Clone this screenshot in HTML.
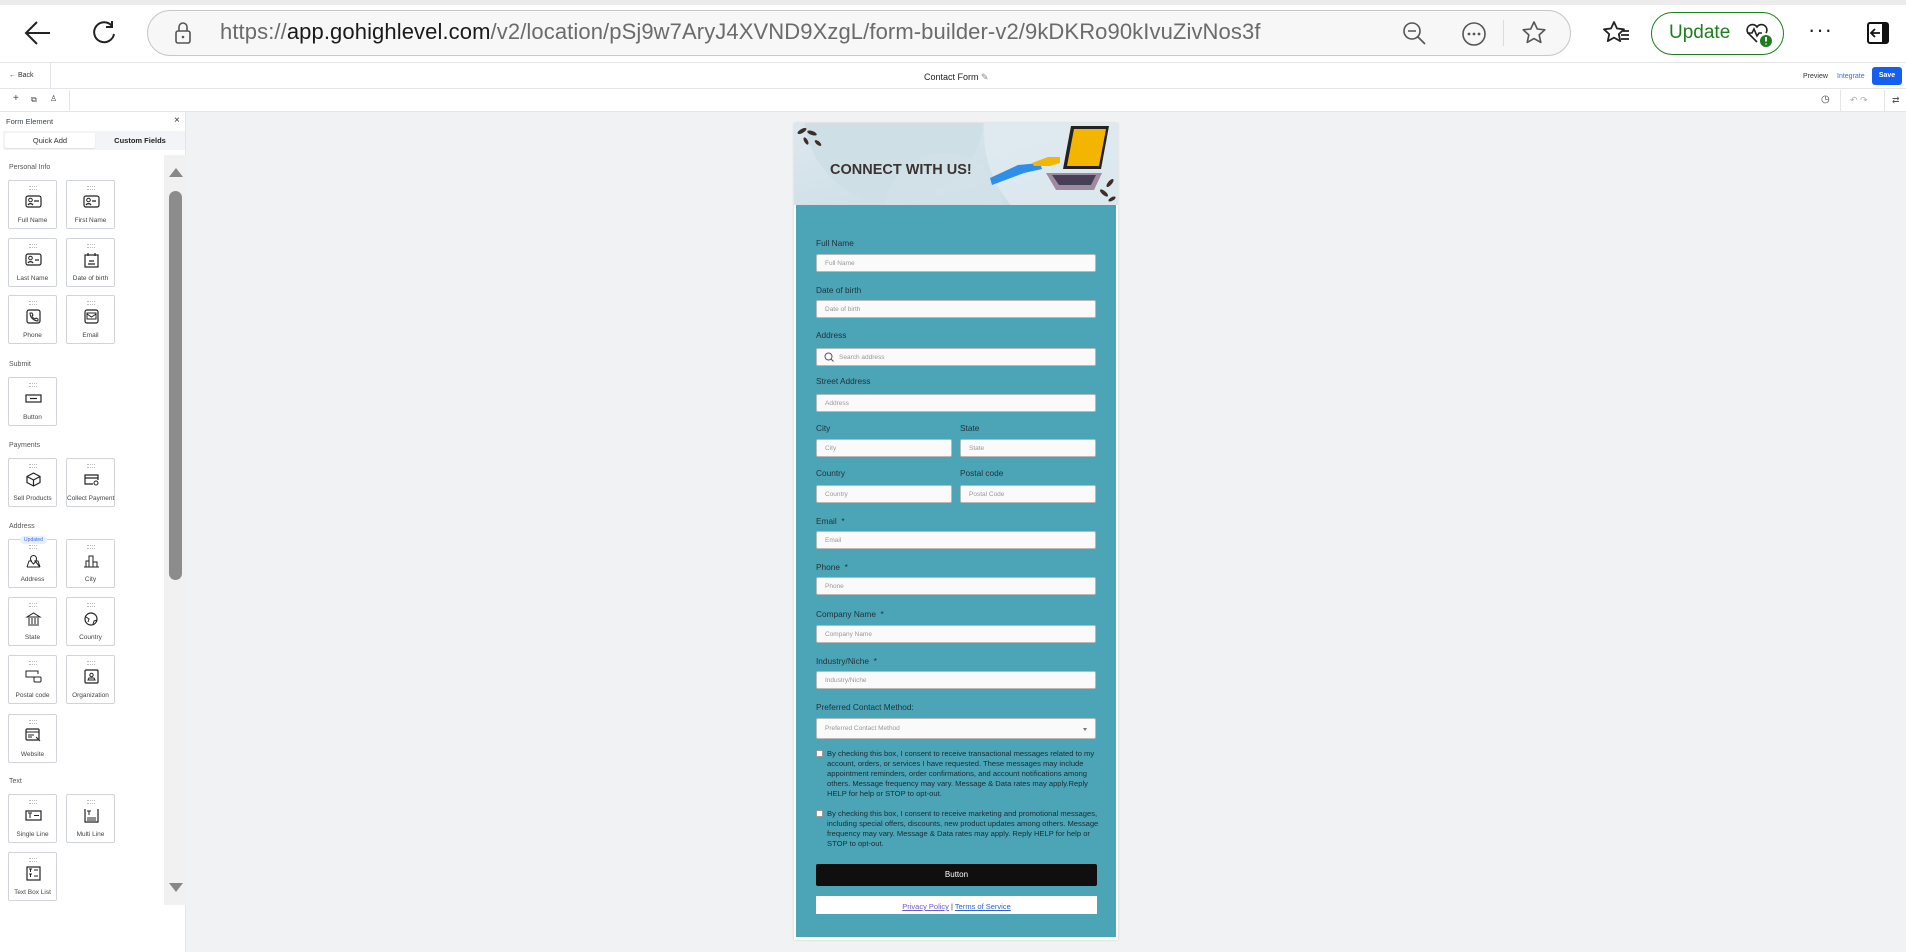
<!DOCTYPE html>
<html><head><meta charset="utf-8">
<style>
*{box-sizing:border-box;margin:0;padding:0}
body{width:1906px;height:952px;overflow:hidden;background:#f1f2f4;font-family:"Liberation Sans",sans-serif;position:relative}
.a{position:absolute}
.chrome{left:0;top:0;width:1906px;height:62px;background:#fff}
.url{left:147px;top:10px;width:1424px;height:46px;border:1px solid #c8c8c8;border-radius:23px;background:#f7f7f7}
.urlt{left:220px;top:19px;font-size:22px;color:#6b6b6b;white-space:nowrap;letter-spacing:.1px}
.urlt b{font-weight:normal;color:#1a1a1a}
.hdr{left:0;top:62px;width:1906px;height:27px;background:#fff;border-bottom:1px solid #e4e5e8;border-top:1px solid #e4e5e8}
.tb{left:0;top:89px;width:1906px;height:23px;background:#fff;border-bottom:1px solid #e4e5e8}
.panel{left:0;top:112px;width:186px;height:840px;background:#fff;border-right:1px solid #e4e5e8}
.sec{font-size:7px;color:#555;left:9px}
.tile{width:49px;height:49px;border:1px solid #d0d4da;border-radius:2px;background:#fff}
.tile .dots{position:absolute;left:20px;top:5px;width:8px;height:4px;border-top:1px dotted #bbb;border-bottom:1px dotted #bbb}
.tile svg{position:absolute;left:16px;top:13px}
.tile span{position:absolute;left:0;right:0;top:36px;text-align:center;font-size:6.5px;color:#444;white-space:nowrap}
.form{left:794px;top:123px;width:324px;height:817px;background:#fff;box-shadow:0 0 2px #ccc}
.teal{left:796px;top:205px;width:320px;height:732px;background:#4ba5b7}
.lbl{font-size:8.3px;color:#23323a;left:816px}
.inp{left:816px;width:280px;height:18px;background:#fafafa;border:1px solid #b9b9b9;border-radius:2px;font-size:6.5px;color:#999;padding:5px 0 0 8px;white-space:nowrap}
.cb{left:816px;width:7px;height:7px;background:#fff;border:1px solid #999;border-radius:1px}
.cbt{left:827px;width:275px;font-size:7.6px;line-height:10px;color:#1c2b33}
</style></head><body>
<div class="a chrome"></div>
<div class="a" style="left:0;top:0;width:1906px;height:5px;background:#ececec"></div>
<svg class="a" style="left:24px;top:20px" width="28" height="26" viewBox="0 0 28 26"><path d="M26 13H3M13 2L2 13l11 11" fill="none" stroke="#222" stroke-width="2"/></svg>
<svg class="a" style="left:91px;top:20px" width="26" height="26" viewBox="0 0 26 26"><path d="M21 6A10 10 0 1 0 23 14M21 1v6h-6" fill="none" stroke="#222" stroke-width="2"/></svg>
<div class="a url"></div>
<svg class="a" style="left:174px;top:21px" width="18" height="24" viewBox="0 0 18 24"><rect x="2" y="10" width="14" height="12" rx="2" fill="none" stroke="#555" stroke-width="1.6"/><path d="M5 10V6a4 4 0 0 1 8 0v4" fill="none" stroke="#555" stroke-width="1.6"/><circle cx="9" cy="16" r="1.3" fill="#555"/></svg>
<div class="a urlt">https://<b>app.gohighlevel.com</b>/v2/location/pSj9w7AryJ4XVND9XzgL/form-builder-v2/9kDKRo90kIvuZivNos3f</div>
<svg class="a" style="left:1402px;top:21px" width="26" height="26" viewBox="0 0 26 26"><circle cx="10" cy="10" r="8" fill="none" stroke="#555" stroke-width="1.6"/><path d="M6 10h8M16 16l7 7" stroke="#555" stroke-width="1.6"/></svg>
<svg class="a" style="left:1461px;top:21px" width="26" height="26" viewBox="0 0 26 26"><circle cx="13" cy="13" r="11" fill="none" stroke="#555" stroke-width="1.6"/><circle cx="8" cy="13" r="1.4" fill="#555"/><circle cx="13" cy="13" r="1.4" fill="#555"/><circle cx="18" cy="13" r="1.4" fill="#555"/></svg>
<div class="a" style="left:1503px;top:20px;width:1px;height:26px;background:#ddd"></div>
<svg class="a" style="left:1521px;top:20px" width="26" height="26" viewBox="0 0 26 26"><path d="M13 2l3.3 7 7.5.8-5.6 5.1 1.6 7.5L13 18.6 6.2 22.4l1.6-7.5L2.2 9.8 9.7 9z" fill="none" stroke="#555" stroke-width="1.6" stroke-linejoin="round"/></svg>
<svg class="a" style="left:1603px;top:20px" width="28" height="26" viewBox="0 0 28 26"><path d="M11 2l3 6.5 7 .8-5.2 4.8 1.4 7L11 17.6 4.8 21.1l1.4-7L1 9.3l7-.8z" fill="none" stroke="#222" stroke-width="1.8" stroke-linejoin="round"/><path d="M18 15h8M18 19h8M20 11h6" stroke="#222" stroke-width="1.8"/></svg>
<div class="a" style="left:1651px;top:12px;width:133px;height:43px;border:1.5px solid #1e7d1e;border-radius:22px"></div>
<div class="a" style="left:1669px;top:22px;font-size:19px;color:#1e7d1e">Update</div>
<svg class="a" style="left:1744px;top:20px" width="32" height="30" viewBox="0 0 32 30"><path d="M13 22L4 13a5 5 0 0 1 9-6 5 5 0 0 1 9 6M3 13h5l2-4 3 7 2-3h3" fill="none" stroke="#222" stroke-width="1.6"/><circle cx="22" cy="21" r="6" fill="#1e7d1e"/><path d="M22 17v4.5M22 23.5v1" stroke="#fff" stroke-width="1.8"/></svg>
<div class="a" style="left:1808px;top:17px;font-size:22px;color:#222;letter-spacing:1px">···</div>
<svg class="a" style="left:1866px;top:21px" width="24" height="24" viewBox="0 0 24 24"><rect x="2" y="2" width="20" height="20" rx="2" fill="none" stroke="#111" stroke-width="2"/><rect x="16" y="2" width="6" height="20" fill="#111"/><path d="M14 12H6M9 8l-4 4 4 4" fill="none" stroke="#111" stroke-width="1.8"/></svg>

<div class="a hdr"></div>
<div class="a" style="left:9px;top:72px;font-size:7px;color:#333">← Back</div>
<div class="a" style="left:50px;top:63px;width:1px;height:26px;background:#e4e5e8"></div>
<div class="a" style="left:924px;top:72px;font-size:9px;color:#222">Contact Form <span style="color:#888">✎</span></div>
<div class="a" style="left:1803px;top:73px;font-size:7px;color:#333">Preview</div>
<div class="a" style="left:1837px;top:73px;font-size:7px;color:#3b6de0">Integrate</div>
<div class="a" style="left:1872px;top:67px;width:30px;height:18px;background:#155eef;border-radius:3px;color:#fff;font-size:7px;font-weight:bold;text-align:center;line-height:18px">Save</div>
<div class="a tb"></div>
<div class="a" style="left:13px;top:93px;font-size:10px;color:#444">+</div>
<div class="a" style="left:31px;top:95px;font-size:8px;color:#444">⧉</div>
<div class="a" style="left:50px;top:94px;font-size:8px;color:#444">♙</div>
<div class="a" style="left:69px;top:90px;width:1px;height:22px;background:#e4e5e8"></div>
<div class="a" style="left:1821px;top:94px;font-size:10px;color:#444">◷</div>
<div class="a" style="left:1840px;top:90px;width:1px;height:22px;background:#e4e5e8"></div>
<div class="a" style="left:1850px;top:95px;font-size:9px;color:#aaa">↶ ↷</div>
<div class="a" style="left:1884px;top:90px;width:1px;height:22px;background:#e4e5e8"></div>
<div class="a" style="left:1892px;top:95px;font-size:9px;color:#555">⇄</div>

<div class="a panel"></div>
<div class="a" style="left:6px;top:117px;font-size:7.5px;color:#3a4654">Form Element</div>
<div class="a" style="left:174px;top:115px;font-size:10px;color:#333">×</div>
<div class="a" style="left:3px;top:131px;width:182px;height:19px;background:#f2f4f7"></div>
<div class="a" style="left:5px;top:133px;width:90px;height:15px;background:#fff;border-radius:2px;box-shadow:0 1px 1px #e0e0e0;font-size:7.5px;color:#333;text-align:center;line-height:15px">Quick Add</div>
<div class="a" style="left:96px;top:133px;width:88px;height:15px;font-size:7.5px;color:#222;font-weight:bold;text-align:center;line-height:15px">Custom Fields</div>
<div class="a" style="left:164px;top:155px;width:22px;height:750px;background:#f1f1f1"></div>
<div class="a" style="left:169px;top:168px;width:0;height:0;border-left:7px solid transparent;border-right:7px solid transparent;border-bottom:9px solid #888"></div>
<div class="a" style="left:169px;top:191px;width:13px;height:389px;background:#8c8c8c;border-radius:7px"></div>
<div class="a" style="left:169px;top:883px;width:0;height:0;border-left:7px solid transparent;border-right:7px solid transparent;border-top:9px solid #888"></div>

<div class="a sec" style="top:164px">Personal Info</div>
<div class="a sec" style="top:361px">Submit</div>
<div class="a sec" style="top:442px">Payments</div>
<div class="a sec" style="top:523px">Address</div>
<div class="a sec" style="top:778px">Text</div>

<div class="a tile" style="left:8px;top:180px"><div class="dots"></div><svg width="17" height="15" viewBox="0 0 17 15"><rect x="1" y="2" width="15" height="11" rx="2" fill="none" stroke="#222" stroke-width="1.2"/><circle cx="5.5" cy="6" r="1.8" fill="none" stroke="#222"/><path d="M3 11a3 3 0 0 1 5 0M9 7h5" stroke="#222" fill="none" stroke-width="1.2"/></svg><span>Full Name</span></div>
<div class="a tile" style="left:66px;top:180px"><div class="dots"></div><svg width="17" height="15" viewBox="0 0 17 15"><rect x="1" y="2" width="15" height="11" rx="2" fill="none" stroke="#222" stroke-width="1.2"/><circle cx="5.5" cy="6" r="1.8" fill="none" stroke="#222"/><path d="M3 11a3 3 0 0 1 5 0M9 7h4" stroke="#222" fill="none" stroke-width="1.2"/></svg><span>First Name</span></div>
<div class="a tile" style="left:8px;top:238px"><div class="dots"></div><svg width="17" height="15" viewBox="0 0 17 15"><rect x="1" y="2" width="15" height="11" rx="2" fill="none" stroke="#222" stroke-width="1.2"/><circle cx="5.5" cy="6" r="1.8" fill="none" stroke="#222"/><path d="M3 11a3 3 0 0 1 5 0M10 8h4" stroke="#222" fill="none" stroke-width="1.2"/></svg><span>Last Name</span></div>
<div class="a tile" style="left:66px;top:238px"><div class="dots"></div><svg width="17" height="16" viewBox="0 0 17 16"><rect x="2" y="3" width="13" height="12" fill="none" stroke="#222" stroke-width="1.2"/><path d="M5 1v3M12 1v3M5 12h7M6 9h5" stroke="#222" stroke-width="1.2"/></svg><span>Date of birth</span></div>
<div class="a tile" style="left:8px;top:295px"><div class="dots"></div><svg width="17" height="15" viewBox="0 0 17 15"><rect x="2" y="1" width="13" height="13" rx="2" fill="none" stroke="#222" stroke-width="1.2"/><path d="M5 4l2 0 1 2-1 1a5 5 0 0 0 3 3l1-1 2 1v2a8 8 0 0 1-8-8z" fill="none" stroke="#222"/></svg><span>Phone</span></div>
<div class="a tile" style="left:66px;top:295px"><div class="dots"></div><svg width="17" height="15" viewBox="0 0 17 15"><rect x="2" y="1" width="13" height="13" rx="2" fill="none" stroke="#222" stroke-width="1.2"/><path d="M4 5l4.5 3L13 5M4 4h9v6H4z" fill="none" stroke="#222"/></svg><span>Email</span></div>
<div class="a tile" style="left:8px;top:377px"><div class="dots"></div><svg width="17" height="15" viewBox="0 0 17 15"><rect x="1" y="4" width="15" height="7" fill="none" stroke="#222" stroke-width="1.2"/><path d="M5 7.5h7" stroke="#222" stroke-width="1.2"/></svg><span>Button</span></div>
<div class="a tile" style="left:8px;top:458px"><div class="dots"></div><svg width="17" height="15" viewBox="0 0 17 15"><path d="M8.5 1L15 4.5v6L8.5 14 2 10.5v-6zM2 4.5l6.5 3.5L15 4.5M8.5 8v6" fill="none" stroke="#222" stroke-width="1.2"/></svg><span>Sell Products</span></div>
<div class="a tile" style="left:66px;top:458px"><div class="dots"></div><svg width="17" height="15" viewBox="0 0 17 15"><path d="M10 12H2V3h13v5M2 6h13" fill="none" stroke="#222" stroke-width="1.2"/><circle cx="13" cy="11" r="2" fill="none" stroke="#222"/></svg><span>Collect Payment</span></div>
<div class="a tile" style="left:8px;top:539px"><div class="dots"></div><div style="position:absolute;left:11px;top:-4px;width:27px;height:8px;background:#e8efff;border-radius:4px;font-size:5px;color:#3b6de0;text-align:center;line-height:8px">Updated</div><svg width="17" height="15" viewBox="0 0 17 15"><path d="M2 14l2-6h3M10 8h3l2 6z M2 14h13" fill="none" stroke="#222"/><path d="M8.5 11s-3-3-3-5.5a3 3 0 0 1 6 0c0 2.5-3 5.5-3 5.5z" fill="none" stroke="#222"/></svg><span>Address</span></div>
<div class="a tile" style="left:66px;top:539px"><div class="dots"></div><svg width="17" height="15" viewBox="0 0 17 15"><path d="M1 14h15M3 14V8h3v6M6 14V3h4v11M10 14V9h4v5" fill="none" stroke="#222"/></svg><span>City</span></div>
<div class="a tile" style="left:8px;top:597px"><div class="dots"></div><svg width="17" height="15" viewBox="0 0 17 15"><path d="M2 6h13L8.5 2zM3 14h11M4 7v6M7 7v6M10 7v6M13 7v6" fill="none" stroke="#222"/></svg><span>State</span></div>
<div class="a tile" style="left:66px;top:597px"><div class="dots"></div><svg width="17" height="15" viewBox="0 0 17 15"><circle cx="8" cy="8" r="6" fill="none" stroke="#222" stroke-width="1.2"/><path d="M3 6l3 2-1 3M10 13l1-3 3-1" fill="none" stroke="#222"/></svg><span>Country</span></div>
<div class="a tile" style="left:8px;top:655px"><div class="dots"></div><svg width="17" height="15" viewBox="0 0 17 15"><path d="M10 8H1V2h12v3" fill="none" stroke="#222"/><rect x="9" y="8" width="7" height="5" rx="1" fill="none" stroke="#222"/></svg><span>Postal code</span></div>
<div class="a tile" style="left:66px;top:655px"><div class="dots"></div><svg width="17" height="15" viewBox="0 0 17 15"><rect x="2" y="1" width="13" height="13" rx="1" fill="none" stroke="#222" stroke-width="1.2"/><circle cx="8.5" cy="6" r="1.7" fill="none" stroke="#222"/><path d="M5 11h7l-1-2H6z" fill="none" stroke="#222"/></svg><span>Organization</span></div>
<div class="a tile" style="left:8px;top:714px"><div class="dots"></div><svg width="17" height="15" viewBox="0 0 17 15"><rect x="1" y="1" width="13" height="11" rx="1" fill="none" stroke="#222" stroke-width="1.2"/><path d="M1 4h13M3 7h6M3 9h4M11 9l4 4" fill="none" stroke="#222"/></svg><span>Website</span></div>
<div class="a tile" style="left:8px;top:794px"><div class="dots"></div><svg width="17" height="15" viewBox="0 0 17 15"><rect x="1" y="3" width="15" height="9" fill="none" stroke="#222" stroke-width="1.2"/><path d="M3 5h4M5 5v5M9 7.5h5" stroke="#222"/></svg><span>Single Line</span></div>
<div class="a tile" style="left:66px;top:794px"><div class="dots"></div><svg width="17" height="15" viewBox="0 0 17 15"><path d="M2 1v13h13V1" fill="none" stroke="#222" stroke-width="1.2"/><path d="M4 3h4M6 3v4M4 10h9M4 12h9" stroke="#222"/></svg><span>Multi Line</span></div>
<div class="a tile" style="left:8px;top:852px"><div class="dots"></div><svg width="17" height="15" viewBox="0 0 17 15"><rect x="2" y="1" width="13" height="13" fill="none" stroke="#222" stroke-width="1.2"/><path d="M4 3h3M5.5 3v3M9 4h4M4 8h3M5.5 8v3M9 10h4" stroke="#222"/></svg><span>Text Box List</span></div>

<!-- form -->
<div class="a form"></div>
<svg class="a" style="left:794px;top:123px" width="324" height="82" viewBox="0 0 324 82">
<defs><linearGradient id="g" x1="0" y1="0" x2="1" y2="1"><stop offset="0" stop-color="#dde8ee"/><stop offset="1" stop-color="#c7dbe3"/></linearGradient></defs>
<rect width="324" height="82" fill="url(#g)"/>
<circle cx="100" cy="-10" r="90" fill="#cfdfe6"/>
<circle cx="300" cy="10" r="110" fill="#e3edf2" opacity=".7"/>
<circle cx="150" cy="90" r="60" fill="#d3e3ea" opacity=".6"/>
<g fill="#3d2e28"><ellipse cx="8" cy="8" rx="5" ry="2" transform="rotate(-30 8 8)"/><ellipse cx="18" cy="10" rx="5" ry="2" transform="rotate(20 18 10)"/><ellipse cx="12" cy="18" rx="4" ry="1.8" transform="rotate(60 12 18)"/><ellipse cx="24" cy="20" rx="4" ry="1.8" transform="rotate(40 24 20)"/>
<ellipse cx="316" cy="60" rx="5" ry="2" transform="rotate(-50 316 60)"/><ellipse cx="310" cy="70" rx="5" ry="2" transform="rotate(40 310 70)"/><ellipse cx="318" cy="76" rx="4" ry="1.8" transform="rotate(-30 318 76)"/></g>
<text x="36" y="51" font-family="Liberation Sans" font-weight="bold" font-size="14.5" fill="#3a3330">CONNECT WITH US!</text>
<path d="M196 55l28-13 22-2 2 6-18 4-32 12z" fill="#2f8fe8"/>
<path d="M238 40l16-6 12 0 0 6-10 3-16 0z" fill="#f2b705"/>
<path d="M277 3h38l-8 43h-38z" fill="#222"/><path d="M280 6h32l-7 37h-32z" fill="#f3b500"/>
<path d="M252 50h56l-8 17h-38z" fill="#a08aa0"/><path d="M258 52h44l-5 10h-32z" fill="#473f58"/>
</svg>
<div class="a teal"></div>

<div class="a lbl" style="top:238px">Full Name</div>
<div class="a inp" style="top:254px">Full Name</div>
<div class="a lbl" style="top:285px">Date of birth</div>
<div class="a inp" style="top:300px">Date of birth</div>
<div class="a lbl" style="top:330px">Address</div>
<div class="a inp" style="top:348px;padding-left:22px">Search address</div>
<svg class="a" style="left:824px;top:352px" width="10" height="10" viewBox="0 0 10 10"><circle cx="4.5" cy="4.5" r="3.5" fill="none" stroke="#556" stroke-width="1"/><path d="M7 7l2.5 2.5" stroke="#556"/></svg>
<div class="a lbl" style="top:376px">Street Address</div>
<div class="a inp" style="top:394px">Address</div>
<div class="a lbl" style="top:423px">City</div>
<div class="a lbl" style="top:423px;left:960px">State</div>
<div class="a inp" style="top:439px;width:136px">City</div>
<div class="a inp" style="top:439px;left:960px;width:136px">State</div>
<div class="a lbl" style="top:468px">Country</div>
<div class="a lbl" style="top:468px;left:960px">Postal code</div>
<div class="a inp" style="top:485px;width:136px">Country</div>
<div class="a inp" style="top:485px;left:960px;width:136px">Postal Code</div>
<div class="a lbl" style="top:516px">Email &nbsp;*</div>
<div class="a inp" style="top:531px">Email</div>
<div class="a lbl" style="top:562px">Phone &nbsp;*</div>
<div class="a inp" style="top:577px">Phone</div>
<div class="a lbl" style="top:609px">Company Name &nbsp;*</div>
<div class="a inp" style="top:625px">Company Name</div>
<div class="a lbl" style="top:656px">Industry/Niche &nbsp;*</div>
<div class="a inp" style="top:671px">Industry/Niche</div>
<div class="a lbl" style="top:702px">Preferred Contact Method:</div>
<div class="a inp" style="top:718px;height:21px;padding-top:6px">Preferred Contact Method</div>
<div class="a" style="left:1083px;top:728px;border-left:2.5px solid transparent;border-right:2.5px solid transparent;border-top:3px solid #777"></div>
<div class="a cb" style="top:750px"></div>
<div class="a cbt" style="top:749px">By checking this box, I consent to receive transactional messages related to my account, orders, or services I have requested. These messages may include appointment reminders, order confirmations, and account notifications among others. Message frequency may vary. Message &amp; Data rates may apply.Reply HELP for help or STOP to opt-out.</div>
<div class="a cb" style="top:810px"></div>
<div class="a cbt" style="top:809px">By checking this box, I consent to receive marketing and promotional messages, including special offers, discounts, new product updates among others. Message frequency may vary. Message &amp; Data rates may apply. Reply HELP for help or STOP to opt-out.</div>
<div class="a" style="left:816px;top:864px;width:281px;height:22px;background:#0f0f0f;border-radius:2px;color:#fff;font-size:8px;text-align:center;line-height:22px">Button</div>
<div class="a" style="left:816px;top:896px;width:281px;height:18px;background:#fff;font-size:7.5px;text-align:center;padding-top:6px;color:#333"><u style="color:#6a5acd">Privacy Policy</u> | <u style="color:#2a62d8">Terms of Service</u></div>
</body></html>
